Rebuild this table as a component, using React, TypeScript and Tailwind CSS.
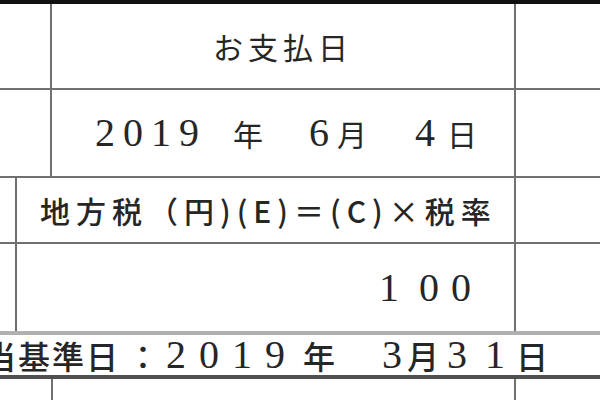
import React from 'react';

// Scanned spreadsheet fragment: payment date / local tax table
const jp = "font-['Noto_Sans_CJK_JP',sans-serif]";
const num = "font-['Liberation_Serif',serif]";

const App = () => {
  return (
    <div className="w-[600px] h-[400px] overflow-hidden bg-white text-[#262626] border-t-[4px] border-[#111]">
      {/* Upper block: heading + payment date */}
      <div className="flex h-[86px] border-b-2 border-[#707070]">
        <div className="w-[52px] border-r-2 border-[#707070]" />
        <div className={`flex-1 flex items-center border-r-2 border-[#707070] pl-[161px] text-[30px] tracking-[5px] ${jp}`}>
          お支払日
        </div>
        <div className="w-[84px]" />
      </div>
      <div className="flex h-[88px] border-b-2 border-[#707070]">
        <div className="w-[52px] border-r-2 border-[#707070]" />
        <div className="flex-1 flex items-center border-r-2 border-[#707070] pl-[43px] whitespace-nowrap">
          <span className={`${num} text-[40px] tracking-[8px]`}>2019</span>
          <span className={`${jp} text-[30px] ml-[26px]`}>年</span>
          <span className={`${num} text-[40px] ml-[46px]`}>6</span>
          <span className={`${jp} text-[30px] ml-[8px]`}>月</span>
          <span className={`${num} text-[40px] ml-[48px]`}>4</span>
          <span className={`${jp} text-[30px] ml-[12px]`}>日</span>
        </div>
        <div className="w-[84px]" />
      </div>

      {/* Local tax block */}
      <div className="flex h-[66px] border-b-2 border-[#707070]">
        <div className="w-[17px] border-r-2 border-[#707070]" />
        <div className={`flex-1 flex items-center border-r-2 border-[#707070] pl-[23px] whitespace-nowrap text-[30px] font-medium tracking-[6px] ${jp}`}>
          地方税（円)(E)＝(C)×税率
        </div>
        <div className="w-[84px]" />
      </div>
      <div className="flex h-[87px]">
        <div className="w-[17px] border-r-2 border-[#707070]" />
        <div className={`flex-1 flex items-center justify-end border-r-2 border-[#707070] pr-[31px] text-[40px] ${num}`}>
          <span className="mr-[20px]">1</span>
          <span className="tracking-[12px]">00</span>
        </div>
        <div className="w-[84px]" />
      </div>

      {/* Base date line (left edge of the label is cut off in the scan) */}
      <div className="flex items-center h-[48px] border-t-[4px] border-b-[4px] border-t-[#b0b0b0] border-b-[#505050] whitespace-nowrap">
        <span className={`${jp} font-medium text-[32px] tracking-[2px] ml-[-16px]`}>当基準日</span>
        <span className={`${jp} font-medium text-[32px] ml-[7px]`}>：</span>
        <span className={`${num} text-[40px] tracking-[13px] ml-[7px]`}>2019</span>
        <span className={`${jp} font-medium text-[32px] ml-[5px]`}>年</span>
        <span className={`${num} text-[40px] ml-[47px]`}>3</span>
        <span className={`${jp} font-medium text-[32px] ml-[5px]`}>月</span>
        <span className={`${num} text-[40px] ml-[8px]`}>3</span>
        <span className={`${num} text-[40px] ml-[18px]`}>1</span>
        <span className={`${jp} font-medium text-[32px] ml-[11px]`}>日</span>
      </div>

      {/* Next row, cut off */}
      <div className="flex h-[40px]">
        <div className="w-[53px] border-r-2 border-[#707070]" />
        <div className="flex-1 border-r-2 border-[#707070]" />
        <div className="w-[84px]" />
      </div>
    </div>
  );
};

export default App;
